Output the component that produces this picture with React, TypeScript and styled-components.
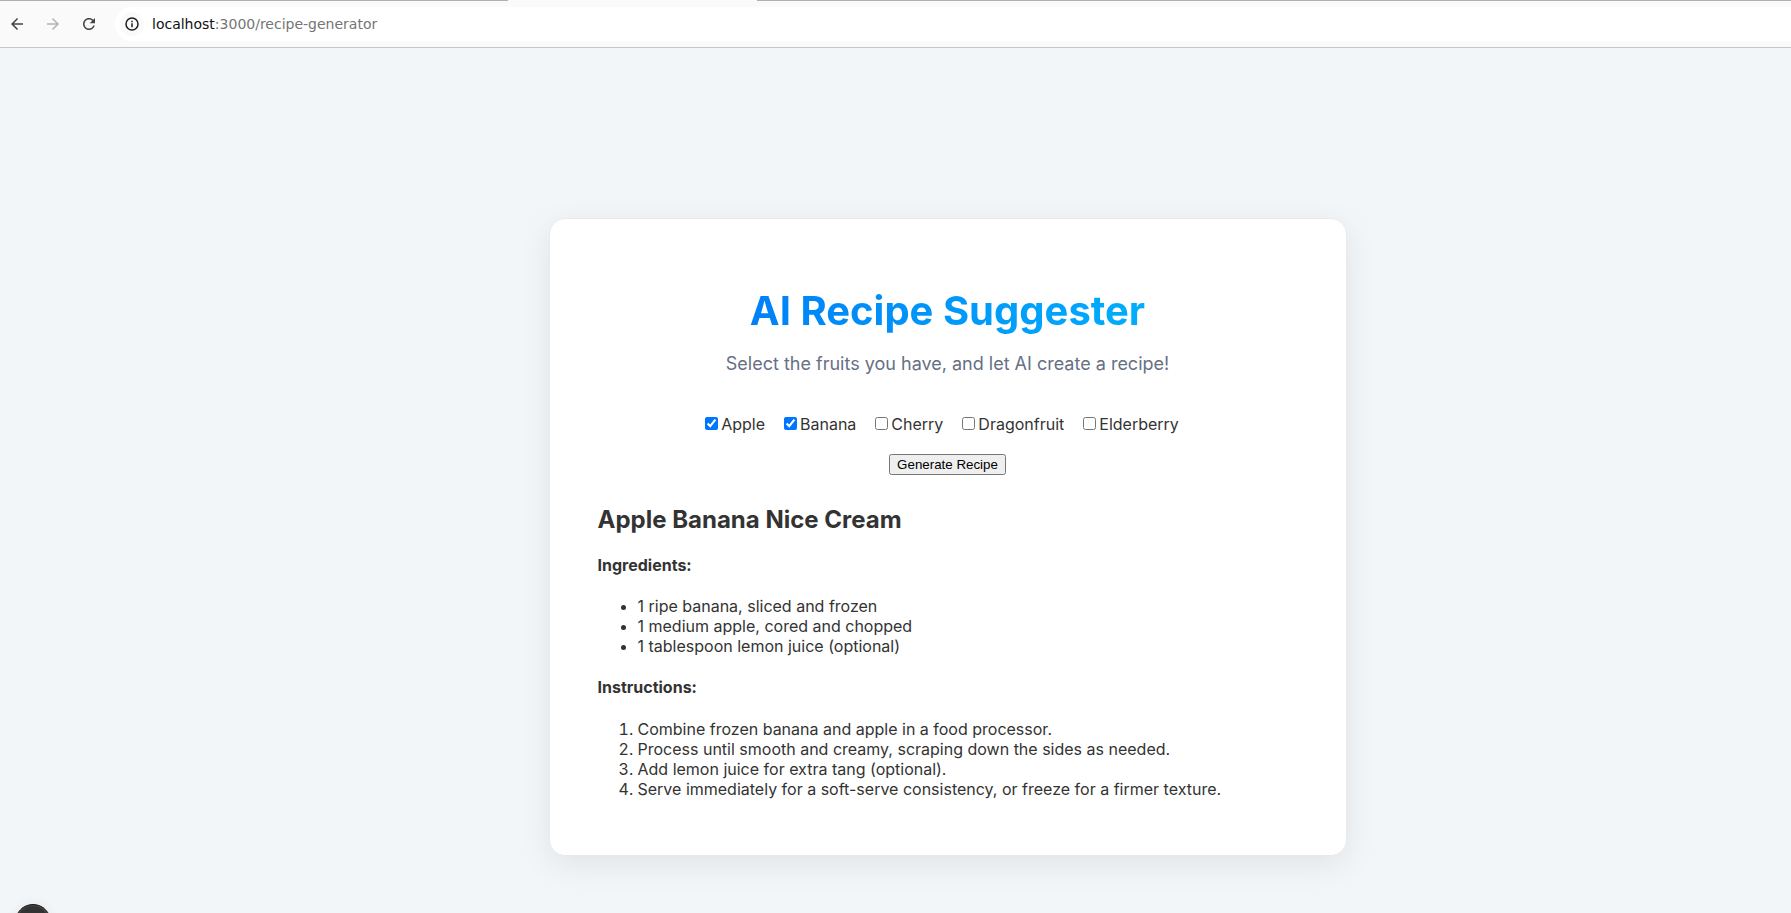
import React, { useState } from "react";
import styled, { createGlobalStyle } from "styled-components";

const GlobalStyle = createGlobalStyle`
  *, *::before, *::after { box-sizing: border-box; }
  html, body { margin: 0; padding: 0; }
  body {
    background: #f2f6f9;
    color: #333333;
    font-family: Inter, "Liberation Sans", sans-serif;
    font-size: 16px;
    line-height: 20px;
    overflow: hidden;
  }
`;

const Window = styled.div`
  display: flex;
  flex-direction: column;
  min-height: 100vh;
`;

const TabEdge = styled.div`
  display: flex;
  height: 1px;
  background: #fafafa;
`;

const TabLine = styled.span<{ $grow?: boolean }>`
  flex: ${(p) => (p.$grow ? "1 1 0" : "0 0 508px")};
  background: #b0b0b0;
`;

const ActiveTab = styled.span`
  flex: 0 0 249px;
`;

const Toolbar = styled.header`
  display: flex;
  align-items: center;
  height: 47px;
  padding: 0 0 0 7px;
  background: #fafafa;
  border-bottom: 1px solid #c6c6c6;
`;

const NavButton = styled.button`
  display: flex;
  align-items: center;
  justify-content: center;
  width: 20px;
  height: 20px;
  margin: 0 16px 0 0;
  padding: 0;
  border: 0;
  background: transparent;
  color: #444444;
  &:disabled { color: #b4b4b4; }
`;

const AddressBar = styled.div`
  display: flex;
  align-items: center;
  flex: 1;
  height: 34px;
  padding-left: 5px;
  border-radius: 17px 0 0 17px;
  background: #ffffff;
`;

const InfoButton = styled.button`
  display: flex;
  align-items: center;
  justify-content: center;
  width: 24px;
  height: 24px;
  margin-right: 8px;
  padding: 0;
  border: 0;
  border-radius: 50%;
  background: #fafafa;
  color: #1f1f1f;
`;

const Address = styled.a`
  color: #757575;
  font: 14px/20px "DejaVu Sans", sans-serif;
  text-decoration: none;
`;

const Host = styled.span`
  color: #111111;
`;

const Page = styled.main`
  display: flex;
  flex: 1;
  justify-content: center;
  align-items: flex-start;
  padding: 170px 0 40px 104px;
`;

const Card = styled.section`
  width: 100%;
  max-width: 798px;
  padding: 40px 48px;
  border: 1px solid #eaeaea;
  border-radius: 16px;
  background: #ffffff;
  box-shadow: 0 8px 32px rgba(0, 0, 0, 0.08);
`;

const Title = styled.h1`
  margin: 27px 0 18px;
  font-size: 40px;
  line-height: 49px;
  font-weight: 700;
  text-align: center;
  color: transparent;
  background: linear-gradient(90deg, #0070f3, #00bfff);
  background-clip: text;
  -webkit-background-clip: text;
`;

const Subtitle = styled.p`
  margin: 0 0 40px;
  color: #667085;
  font-size: 18px;
  line-height: 21px;
  text-align: center;
`;

const Fruits = styled.div`
  display: flex;
  flex-wrap: wrap;
  justify-content: center;
`;

const Fruit = styled.label`
  display: block;
  margin-right: 15px;
`;

const Checkbox = styled.input`
  margin: 3px 3px 3px 4px;
`;

const Actions = styled.div`
  display: flex;
  justify-content: center;
  margin: 20px 0 30px;
`;

const GenerateButton = styled.button`
  height: 21px;
  padding: 1px 6px;
  font-family: "Liberation Sans", Arial, sans-serif;
`;

const RecipeName = styled.h2`
  margin: 0 0 21px;
  font-size: 24px;
  line-height: 29px;
  font-weight: 700;
`;

const PartHeading = styled.h4`
  margin: 21px 0;
  font-weight: 700;
`;

const Ingredients = styled.ul`
  margin: 0 0 16px;
  padding-left: 40px;
`;

const Steps = styled.ol`
  margin: 22px 0 16px;
  padding-left: 40px;
`;

const DevBadge = styled.div`
  position: fixed;
  left: 15px;
  bottom: -27px;
  width: 36px;
  height: 36px;
  border: 1px solid #171717;
  border-radius: 50%;
  background: #333333;
  box-shadow: inset 0 0 0 1px #4a4a4a, 0 0 12px rgba(0, 0, 0, 0.06);
`;

const Icon = ({ d }: { d: string }) => (
  <svg width="18" height="18" viewBox="0 0 24 24" fill="currentColor" aria-hidden="true">
    <path d={d} />
  </svg>
);

const BACK = "M20 11H7.83l5.59-5.59L12 4l-8 8 8 8 1.41-1.41L7.83 13H20v-2z";
const FORWARD = "M12 4l-1.41 1.41L16.17 11H4v2h12.17l-5.58 5.59L12 20l8-8z";
const RELOAD =
  "M17.65 6.35C16.2 4.9 14.21 4 12 4c-4.42 0-7.99 3.58-7.99 8s3.57 8 7.99 8c3.73 0 6.84-2.55 7.73-6h-2.08c-.82 2.33-3.04 4-5.65 4-3.31 0-6-2.69-6-6s2.69-6 6-6c1.66 0 3.14.69 4.22 1.78L13 11h7V4l-2.35 2.35z";

const FRUITS = ["Apple", "Banana", "Cherry", "Dragonfruit", "Elderberry"];
const INGREDIENTS = [
  "1 ripe banana, sliced and frozen",
  "1 medium apple, cored and chopped",
  "1 tablespoon lemon juice (optional)",
];
const STEPS = [
  "Combine frozen banana and apple in a food processor.",
  "Process until smooth and creamy, scraping down the sides as needed.",
  "Add lemon juice for extra tang (optional).",
  "Serve immediately for a soft-serve consistency, or freeze for a firmer texture.",
];

export default function App() {
  const [selected, setSelected] = useState<string[]>(["Apple", "Banana"]);
  const toggle = (fruit: string) =>
    setSelected((s) => (s.includes(fruit) ? s.filter((f) => f !== fruit) : [...s, fruit]));

  return (
    <Window>
      <GlobalStyle />
      <TabEdge>
        <TabLine />
        <ActiveTab />
        <TabLine $grow />
      </TabEdge>
      <Toolbar>
        <NavButton aria-label="Back"><Icon d={BACK} /></NavButton>
        <NavButton aria-label="Forward" disabled><Icon d={FORWARD} /></NavButton>
        <NavButton aria-label="Reload"><Icon d={RELOAD} /></NavButton>
        <AddressBar>
          <InfoButton aria-label="View site information">
            <svg width="14" height="14" viewBox="0 0 14 14" fill="none" stroke="currentColor" strokeWidth="1.5" aria-hidden="true">
              <circle cx="7" cy="7" r="6" />
              <path d="M7 6.2v4M7 3.7v1.5" />
            </svg>
          </InfoButton>
          <Address href="/recipe-generator"><Host>localhost</Host>:3000/recipe-generator</Address>
        </AddressBar>
      </Toolbar>
      <Page>
        <Card>
          <Title>AI Recipe Suggester</Title>
          <Subtitle>Select the fruits you have, and let AI create a recipe!</Subtitle>
          <Fruits>
            {FRUITS.map((fruit) => (
              <Fruit key={fruit}>
                <Checkbox type="checkbox" checked={selected.includes(fruit)} onChange={() => toggle(fruit)} />
                {fruit}
              </Fruit>
            ))}
          </Fruits>
          <Actions>
            <GenerateButton type="button">Generate Recipe</GenerateButton>
          </Actions>
          <RecipeName>Apple Banana Nice Cream</RecipeName>
          <PartHeading>Ingredients:</PartHeading>
          <Ingredients>
            {INGREDIENTS.map((item) => <li key={item}>{item}</li>)}
          </Ingredients>
          <PartHeading>Instructions:</PartHeading>
          <Steps>
            {STEPS.map((step) => <li key={step}>{step}</li>)}
          </Steps>
        </Card>
      </Page>
      <DevBadge />
    </Window>
  );
}
